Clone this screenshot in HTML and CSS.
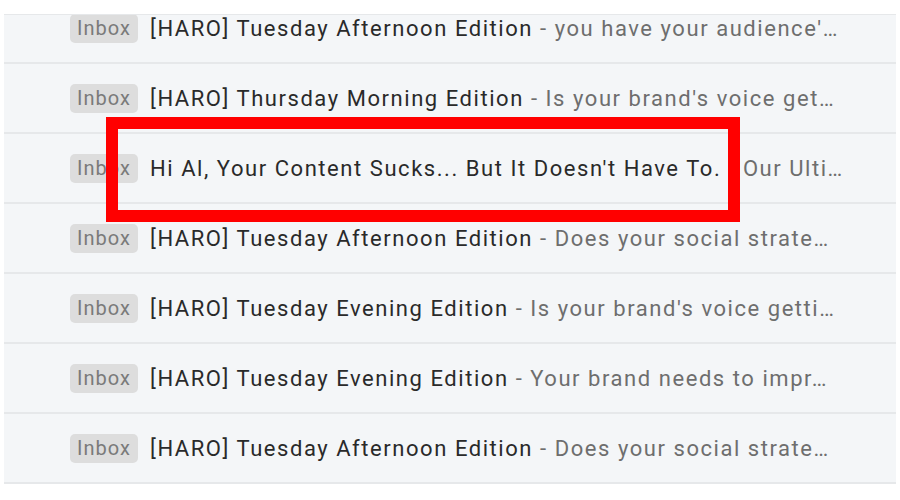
FILE: index.html
```html
<!DOCTYPE html>
<html>
<head>
<meta charset="utf-8">
<link rel="stylesheet" href="styles.css">
</head>
<body>
<div class="frame">
  <div class="list">
    <div class="row"><span class="badge">Inbox</span><span class="line"><span class="subject">[HARO] Tuesday Afternoon Edition</span><span class="snippet"> - you have your audience'…</span></span></div>
    <div class="row"><span class="badge">Inbox</span><span class="line"><span class="subject">[HARO] Thursday Morning Edition</span><span class="snippet"> - Is your brand's voice get…</span></span></div>
    <div class="row"><span class="badge">Inbox</span><span class="line"><span class="subject">Hi Al, Your Content Sucks... But It Doesn't Have To.</span><span class="snippet"> - Our Ulti…</span></span></div>
    <div class="row"><span class="badge">Inbox</span><span class="line"><span class="subject">[HARO] Tuesday Afternoon Edition</span><span class="snippet"> - Does your social strate…</span></span></div>
    <div class="row"><span class="badge">Inbox</span><span class="line"><span class="subject">[HARO] Tuesday Evening Edition</span><span class="snippet"> - Is your brand's voice getti…</span></span></div>
    <div class="row"><span class="badge">Inbox</span><span class="line"><span class="subject">[HARO] Tuesday Evening Edition</span><span class="snippet"> - Your brand needs to impr…</span></span></div>
    <div class="row"><span class="badge">Inbox</span><span class="line"><span class="subject">[HARO] Tuesday Afternoon Edition</span><span class="snippet"> - Does your social strate…</span></span></div>
  </div>
  <div class="highlight"></div>
</div>
</body>
</html>
```
FILE: styles.css
```css
html, body {
  margin: 0;
  padding: 0;
  background: #ffffff;
}
body {
  font-family: Roboto, "Liberation Sans", sans-serif;
}
.frame {
  position: relative;
  margin: 14px 4px 0 4px;
  width: 892px;
  height: 470px;
  overflow: hidden;
  background: #f4f6f8;
  border-top: 1px solid #e6e8ea;
  box-sizing: border-box;
}
.list {
  margin-top: -21px;
}
.row {
  display: flex;
  align-items: center;
  height: 68px;
  border-bottom: 2px solid #e6e8ea;
  padding-left: 66px;
}
.badge {
  flex: none;
  display: inline-flex;
  align-items: center;
  justify-content: center;
  width: 68px;
  height: 29px;
  border-radius: 5px;
  background: #dddddd;
  color: #7a7a7a;
  font-size: 20px;
  letter-spacing: 1px;
  box-sizing: border-box;
}
.line {
  margin-left: 12px;
  width: 740px;
  white-space: nowrap;
  overflow: hidden;
  text-overflow: ellipsis;
  font-size: 22px;
  letter-spacing: 1.55px;
}
.subject {
  color: #2a2a2a;
}
.snippet {
  color: #6e6e6e;
}
.highlight {
  position: absolute;
  left: 102px;
  top: 102px;
  width: 634px;
  height: 105px;
  border: 12px solid #ff0000;
  box-sizing: border-box;
}
```
